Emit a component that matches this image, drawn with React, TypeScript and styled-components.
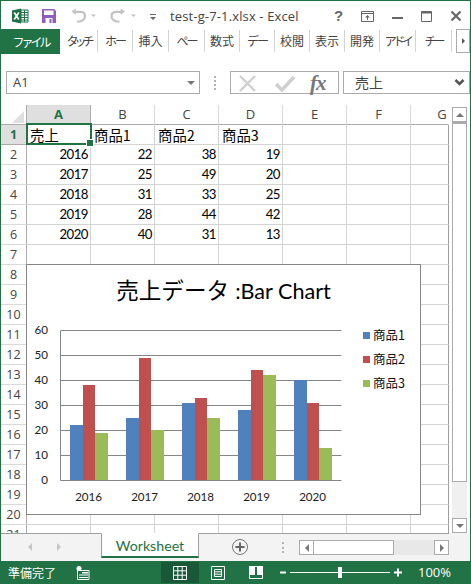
import React from "react";
import styled, { createGlobalStyle } from "styled-components";

const GREEN = "#217346";
const CJK = `"Noto Sans CJK JP", "Noto Sans", sans-serif`;
const LATIN = `Lato, "Noto Sans CJK JP", sans-serif`;
const UI = `"Open Sans", "Noto Sans CJK JP", sans-serif`;

const Global = createGlobalStyle`
  html, body { margin: 0; padding: 0; background: #fff; }
  * { box-sizing: border-box; }
`;

const Win = styled.div`
  width: 471px; height: 584px; display: flex; flex-direction: column;
  border: 1px solid ${GREEN}; border-bottom: 0; background: #fff; overflow: hidden;
  position: relative; font-family: ${UI};
`;

/* Title bar */
const TitleBar = styled.div`
  height: 28px; flex: none; display: flex; align-items: center; position: relative;
`;
const QatIcon = styled.svg<{ $left: number }>`
  position: absolute; left: ${p => p.$left}px; top: 0; display: block;
`;
const DocTitle = styled.div`
  position: absolute; left: 169px; top: 6px; font: 13px/18px ${UI}; color: #444; white-space: nowrap; letter-spacing: 0.14px;
`;

/* Ribbon */
const RibbonTabs = styled.div`
  height: 25px; flex: none; display: flex; align-items: stretch; position: relative;
`;
const FileTab = styled.div`
  width: 59px; background: ${GREEN}; color: #fff; font: 12px/25px ${CJK}; text-align: center; letter-spacing: -3px;
`;
const RibbonTab = styled.div<{ $w: number; $ls?: number }>`
  width: ${p => p.$w}px; height: 22px; margin-top: 1px; border-right: 1px solid #d4d4d4; color: #444;
  font: 12px/22px ${CJK}; text-align: center; white-space: nowrap; overflow: hidden;
  letter-spacing: ${p => p.$ls ?? 0}px;
`;
const RibbonMore = styled.div`
  position: absolute; left: 455px; top: 0; width: 14px; height: 24px; border: 1px solid #ababab; background: #fff;
  display: flex; align-items: center; justify-content: center;
`;
const Tri = styled.i<{ $dir: "r" | "l" | "u" | "d"; $size: number; $color: string }>`
  display: block; width: 0; height: 0; border-style: solid; border-color: transparent;
  border-width: ${p => p.$size}px;
  ${p => p.$dir === "r" && `border-left-color:${p.$color}; border-right-width:0;`}
  ${p => p.$dir === "l" && `border-right-color:${p.$color}; border-left-width:0;`}
  ${p => p.$dir === "u" && `border-bottom-color:${p.$color}; border-top-width:0;`}
  ${p => p.$dir === "d" && `border-top-color:${p.$color}; border-bottom-width:0;`}
`;

/* Formula bar */
const FormulaBar = styled.div`
  height: 51px; flex: none; padding: 17px 0 11px 5px; display: flex; align-items: stretch;
`;
const NameBox = styled.div`
  width: 194px; border: 1px solid #ababab; display: flex; align-items: center; justify-content: space-between;
  padding: 0 4px 0 6px; font: 13px/21px ${UI}; color: #444;
`;
const Grip = styled.div<{ $h: number; $ml: number; $mr: number }>`
  width: 2px; height: ${p => p.$h}px; align-self: center; margin: 0 ${p => p.$mr}px 0 ${p => p.$ml}px;
  background: repeating-linear-gradient(#b4b4b4 0 2px, transparent 2px 4px);
`;
const FormulaButtons = styled.div`
  width: 109px; border: 1px solid #ababab; position: relative; display: flex; align-items: center;
`;
const CommitIcon = styled.svg`
  display: block;
`;
const FxText = styled.span`
  position: absolute; left: 79px; top: -1px; font: italic bold 21px/24px "Liberation Serif", serif; color: #777; letter-spacing: -1px;
`;
const FormulaInput = styled.div`
  width: 127px; margin-left: 4px; border: 1px solid #ababab; display: flex; align-items: center; justify-content: space-between;
  padding: 0 4px 0 11px; font: 14px/21px ${CJK}; color: #444;
`;
const ChevronIcon = styled.svg`
  display: block;
`;

/* Sheet */
const SheetArea = styled.div`
  flex: 1; min-height: 0; display: flex; position: relative;
`;
const Grid = styled.div`
  width: 448px; flex: none; height: 428px; overflow: hidden; position: relative;
  display: grid; grid-template-columns: 26px repeat(6, 64px) 38px; grid-auto-rows: 20px; align-content: start;
`;
const Corner = styled.div`
  border-right: 1px solid #ababab; border-bottom: 1px solid #ababab; position: relative;
  &::after {
    content: ""; position: absolute; right: 2px; bottom: 1px; width: 0; height: 0;
    border-style: solid; border-width: 0 0 12px 12px; border-color: transparent transparent #dfdfdf transparent;
  }
`;
const ColHead = styled.div<{ $active?: boolean; $clipped?: boolean }>`
  border-bottom: 1px solid #ababab; border-right: 1px solid ${p => (p.$active ? "#ababab" : "#dadada")};
  background: ${p => (p.$active ? "#dfdfdf" : "#fff")};
  color: ${p => (p.$active ? GREEN : "#444")}; font: ${p => (p.$active ? 700 : 400)} 13px/19px ${UI}; text-align: center;
  ${p => p.$clipped && "border-right-color:#fff; padding-left: 25px;"}
`;
const RowHead = styled.div<{ $active?: boolean }>`
  border-right: 1px solid #ababab; border-bottom: 1px solid ${p => (p.$active ? "#ababab" : "#dadada")};
  background: ${p => (p.$active ? "#dfdfdf" : "#fff")};
  color: ${p => (p.$active ? GREEN : "#444")}; font: ${p => (p.$active ? 700 : 400)} 12.5px/20px ${UI}; text-align: center;
`;
const Cell = styled.div<{ $text?: boolean; $last?: boolean }>`
  border-right: 1px solid ${p => (p.$last ? "#9f9f9f" : "#d4d4d4")}; border-bottom: 1px solid #d4d4d4; color: #000;
  font: ${p => (p.$text ? `14.4px/19px ${CJK}` : `13.2px/19px ${LATIN}`)};
  letter-spacing: ${p => (p.$text ? 0 : -0.5)}px;
  text-align: ${p => (p.$text ? "left" : "right")};
  padding: ${p => (p.$text ? "0 0 0 3px" : "0 2px 0 0")}; white-space: nowrap;
`;
const ActiveCell = styled.div`
  position: absolute; left: 25px; top: 18px; width: 66px; height: 22px; border: 2px solid ${GREEN}; pointer-events: none;
  &::after {
    content: ""; position: absolute; right: -4px; bottom: -4px; width: 6px; height: 6px;
    background: ${GREEN}; border: 1px solid #fff;
  }
`;

/* Chart */
const ChartBox = styled.div`
  position: absolute; left: 25px; top: 159px; width: 395px; height: 251px;
  background: #fff; border: 1px solid #868686; display: flex; flex-direction: column;
`;
const ChartTitle = styled.div`
  height: 50px; flex: none; text-align: center; color: #000; font: 22.6px/50px ${CJK}; white-space: nowrap;
`;
const ChartTitleLatin = styled.span`
  font: 21.6px/50px ${LATIN}; margin-left: 6px;
`;
const ChartBody = styled.div`
  flex: 1; display: flex;
`;
const PlotSvg = styled.svg`
  display: block; flex: none; font-family: ${LATIN}; font-size: 11.6px;
`;
const Legend = styled.div`
  padding: 10px 0 0 6px; display: flex; flex-direction: column; gap: 4px;
`;
const LegendItem = styled.div`
  display: flex; align-items: center; gap: 3px; height: 20px; font: 12.5px/20px ${CJK}; color: #111;
`;
const Swatch = styled.i<{ $c: string }>`
  display: block; width: 7px; height: 7px; background: ${p => p.$c};
`;

/* Vertical scrollbar */
const VScroll = styled.div`
  width: 15px; flex: none; margin-left: 3px; height: 428px; display: flex; flex-direction: column; padding-top: 2px;
`;
const ScrollBtn = styled.div`
  flex: none; width: 15px; height: 15px; border: 1px solid #ababab; background: #fff;
  display: flex; align-items: center; justify-content: center;
`;
const VThumb = styled.div`
  flex: none; height: 360px; border: 1px solid #ababab; border-top-width: 2px; background: #fff;
`;
const VTrack = styled.div`
  flex: 1; background: #f0f0f0;
`;

/* Tab bar */
const TabBar = styled.div`
  height: 28px; flex: none; background: #f3f3f3; display: flex; align-items: flex-start; position: relative;
`;
const TabLine = styled.div`
  position: absolute; left: 0; top: 0; width: 448px; height: 1px; background: #9f9f9f;
`;
const TabNav = styled.div`
  width: 100px; height: 25px; flex: none; display: flex; align-items: center; gap: 25px; padding: 2px 0 0 27px;
`;
const SheetTab = styled.div`
  width: 98px; height: 25px; flex: none; position: relative; background: #fff; border: 1px solid #9f9f9f; border-top-color: #fff; border-bottom: 2px solid ${GREEN};
  color: ${GREEN}; font: 14.2px/24px ${LATIN}; text-align: center;
`;
const AddSheet = styled.svg`
  display: block; flex: none; margin: 5px 0 0 32px;
`;
const TabGrip = styled.div`
  width: 2px; height: 11px; flex: none; margin: 9px 15px 0 33px;
  background: repeating-linear-gradient(#b4b4b4 0 2px, transparent 2px 4.5px);
`;
const HScroll = styled.div`
  width: 150px; flex: none; height: 15px; margin-top: 7px; display: flex;
`;
const HThumb = styled.div`
  width: 80px; flex: none; background: #fff; border: 1px solid #ababab; border-left: 0;
`;
const HTrack = styled.div`
  flex: 1; background: #e8e8e8;
`;

/* Status bar */
const StatusBar = styled.div`
  height: 23px; flex: none; background: ${GREEN}; margin: 0 -1px; display: flex; align-items: center; color: #fff; position: relative;
`;
const StatusText = styled.div`
  font: 12px/23px ${CJK}; margin-left: 8px; width: 68px; flex: none;
`;
const StatusIcon = styled.svg`
  display: block; flex: none;
`;
const Spacer = styled.div<{ $w: number }>`
  width: ${p => p.$w}px; flex: none;
`;
const ViewButton = styled.div<{ $active?: boolean }>`
  width: 38px; height: 21px; flex: none; display: flex; align-items: center; justify-content: center;
  background: ${p => (p.$active ? "#19593a" : "transparent")};
`;
const ZoomPct = styled.div`
  font: 13px/23px ${UI}; margin-left: 16px; color: #fff;
`;
const ZoomTrack = styled.div`
  width: 100px; height: 1px; background: #fff; flex: none; margin: 0 4px; position: relative;
`;
const ZoomThumb = styled.div`
  position: absolute; left: 48px; top: -5px; width: 4px; height: 11px; background: #fff;
`;

const columns = ["B", "C", "D", "E", "F", "G"];
const data: [number, number, number, number][] = [
  [2016, 22, 38, 19],
  [2017, 25, 49, 20],
  [2018, 31, 33, 25],
  [2019, 28, 44, 42],
  [2020, 40, 31, 13],
];
const series = ["#4f81bd", "#c0504d", "#9bbb59"];
const names = ["商品1", "商品2", "商品3"];
const ribbon: [string, number, number?][] = [
  ["タッチ", 38, -4],
  ["ホー", 35, -2],
  ["挿入", 36],
  ["ペー", 36, -2],
  ["数式", 35],
  ["デー", 35, -2],
  ["校閲", 35],
  ["表示", 35],
  ["開発", 35],
  ["アドイ", 36, -3.5],
  ["チー", 36, -3],
];

const Plot = () => {
  const ox = 27, oy = 315;
  const yFor = (v: number) => 480.5 - v * 2.5 - oy;
  return (
    <PlotSvg width={330} height={199} viewBox="0 0 330 199">
      {[0, 10, 20, 30, 40, 50, 60].map(v => (
        <g key={v}>
          <line x1={60.5 - ox} x2={341.5 - ox} y1={yFor(v)} y2={yFor(v)} stroke="#868686" strokeWidth={1} />
          <text x={48 - ox} y={yFor(v) + 3.5} textAnchor="end" fill="#222">{v}</text>
        </g>
      ))}
      <line x1={60.5 - ox} x2={60.5 - ox} y1={yFor(60)} y2={yFor(0)} stroke="#868686" />
      {data.map((row, i) => (
        <g key={row[0]}>
          {[row[1], row[2], row[3]].map((v, s) => (
            <rect key={s} x={70 + 56 * i + s * 12.5 - ox} width={12.5} y={yFor(v) - 0.5} height={v * 2.5} fill={series[s]} shapeRendering="crispEdges" />
          ))}
          <text x={88.6 + 56 * i - ox} y={501 - oy} textAnchor="middle" fill="#222">{row[0]}</text>
        </g>
      ))}
    </PlotSvg>
  );
};

const RowCells = ({ r }: { r: number }) => {
  const cells: (string | number)[] = r === 1 ? ["売上", ...names] : r <= 6 ? data[r - 2] : ["", "", "", ""];
  return (
    <>
      <RowHead $active={r === 1}>{r}</RowHead>
      {[0, 1, 2, 3, 4, 5, 6].map(c => {
        const v = cells[c];
        return <Cell key={c} $text={typeof v === "string"} $last={c === 6}>{v ?? ""}</Cell>;
      })}
    </>
  );
};

export default function App() {
  return (
    <>
      <Global />
      <Win>
        <TitleBar>
          <QatIcon $left={10} width={18} height={28} viewBox="0 0 18 28">
            <path d="M1 9.500 10 7.500V22.500L1 20.500Z" fill="#1e7145" />
            <path d="M10 9H17V21H10Z" fill="#fff" stroke="#1e7145" />
            <path d="M10 11.500H17M10 14H17M10 16.500H17M10 19H17M13.500 9V21" stroke="#1e7145" strokeWidth={1} />
            <path d="M3.200 11.500 7.800 18.500M7.800 11.500 3.200 18.500" stroke="#fff" strokeWidth={1.700} />
          </QatIcon>
          <QatIcon $left={40} width={16} height={28} viewBox="0 0 16 28">
            <path d="M1 8H13L15 10V22H1Z" fill="#8e5fb8" />
            <path d="M3 9.500H12.500V14H3Z" fill="#fff" />
            <path d="M4.500 17H11.500V22H4.500Z" fill="#fff" />
            <path d="M8.500 18H10.500V22H8.500Z" fill="#8e5fb8" />
          </QatIcon>
          <QatIcon $left={68} width={30} height={28} viewBox="0 0 30 28">
            <path d="M2.500 10.500 6.800 7.500V14Z" fill="#c2c2c2" />
            <path d="M6 10.800H11.500Q16 11 16 15T11 20.500H8" fill="none" stroke="#c2c2c2" strokeWidth={2.200} />
            <path d="M22 13.500H27L24.500 16Z" fill="#c2c2c2" />
          </QatIcon>
          <QatIcon $left={108} width={30} height={28} viewBox="0 0 30 28">
            <path d="M16 10.500 11.700 7.500V14Z" fill="#c2c2c2" />
            <path d="M12.500 10.800H7Q2.500 11 2.500 15T7.500 20.500H10.500" fill="none" stroke="#c2c2c2" strokeWidth={2.200} />
            <path d="M22 13.500H27L24.500 16Z" fill="#c2c2c2" />
          </QatIcon>
          <QatIcon $left={148} width={10} height={28} viewBox="0 0 10 28">
            <path d="M1 13H7V14H1Z" fill="#666" />
            <path d="M1 16H7L4 19Z" fill="#666" />
          </QatIcon>
          <DocTitle>test-g-7-1.xlsx - Excel</DocTitle>
          <QatIcon $left={330} width={140} height={28} viewBox="0 0 140 28">
            <text x={3} y={20} fontFamily="Liberation Sans, sans-serif" fontWeight={700} fontSize={15} fill="#666">?</text>
            <path d="M30.500 10.500H42.500V20.500H30.500Z" fill="none" stroke="#666" />
            <path d="M31 12.500H42" stroke="#666" />
            <path d="M36.500 14 39 16.500H34Z M36 16.500H37V19H36Z" fill="#666" />
            <path d="M61 16H72V18H61Z" fill="#666" />
            <path d="M90.500 10.500H100.500V20.500H90.500Z" fill="none" stroke="#666" />
            <path d="M90.500 11.500H100.500" stroke="#666" strokeWidth={2} />
            <path d="M120.500 10.500 129.500 19.500M129.500 10.500 120.500 19.500" stroke="#666" strokeWidth={2.200} />
          </QatIcon>
        </TitleBar>

        <RibbonTabs>
          <FileTab>ファイル</FileTab>
          {ribbon.map(([label, w, ls]) => (
            <RibbonTab key={label} $w={w} $ls={ls}>{label}</RibbonTab>
          ))}
          <RibbonMore><Tri $dir="r" $size={3} $color="#555" /></RibbonMore>
        </RibbonTabs>

        <FormulaBar>
          <NameBox>A1<Tri $dir="d" $size={4} $color="#777" /></NameBox>
          <Grip $h={14} $ml={14} $mr={14} />
          <FormulaButtons>
            <CommitIcon width="70" height="22" viewBox="0 0 70 22">
              <path d="M9 4 24 19M24 4 9 19" stroke="#cfcfcf" strokeWidth={2.400} fill="none" />
              <path d="M45 12 51 18 63 5" stroke="#cfcfcf" strokeWidth={3.400} fill="none" />
            </CommitIcon>
            <FxText>fx</FxText>
          </FormulaButtons>
          <FormulaInput>
            売上
            <ChevronIcon width="11" height="9" viewBox="0 0 11 9">
              <path d="M1.500 2 5.500 6 9.500 2" stroke="#555" strokeWidth={2.600} fill="none" />
            </ChevronIcon>
          </FormulaInput>
        </FormulaBar>

        <SheetArea>
          <Grid>
            <Corner />
            <ColHead $active>A</ColHead>
            {columns.map((c, i) => <ColHead key={c} $clipped={i === 5}>{c}</ColHead>)}
            {Array.from({ length: 21 }, (_, i) => <RowCells key={i} r={i + 1} />)}
            <ActiveCell />
            <ChartBox>
              <ChartTitle>売上データ<ChartTitleLatin>:Bar Chart</ChartTitleLatin></ChartTitle>
              <ChartBody>
                <Plot />
                <Legend>
                  {names.map((n, i) => (
                    <LegendItem key={n}><Swatch $c={series[i]} />{n}</LegendItem>
                  ))}
                </Legend>
              </ChartBody>
            </ChartBox>
          </Grid>
          <VScroll>
            <ScrollBtn><Tri $dir="u" $size={4} $color="#777" /></ScrollBtn>
            <VThumb />
            <VTrack />
            <ScrollBtn><Tri $dir="d" $size={4} $color="#777" /></ScrollBtn>
          </VScroll>
        </SheetArea>

        <TabBar>
          <TabLine />
          <TabNav>
            <Tri $dir="l" $size={4} $color="#c6c6c6" />
            <Tri $dir="r" $size={4} $color="#c6c6c6" />
          </TabNav>
          <SheetTab>Worksheet</SheetTab>
          <AddSheet width="18" height="18" viewBox="0 0 18 18">
            <circle cx="9" cy="9" r="7.500" fill="none" stroke="#777" />
            <path d="M4.500 9H13.500M9 4.500V13.500" stroke="#666" strokeWidth={2} />
          </AddSheet>
          <TabGrip />
          <HScroll>
            <ScrollBtn><Tri $dir="l" $size={4} $color="#777" /></ScrollBtn>
            <HThumb />
            <HTrack />
            <ScrollBtn><Tri $dir="r" $size={4} $color="#777" /></ScrollBtn>
          </HScroll>
        </TabBar>

        <StatusBar>
          <StatusText>準備完了</StatusText>
          <StatusIcon width="14" height="14" viewBox="0 0 14 14">
            <circle cx="3" cy="2.500" r="2.500" fill="#fff" />
            <path d="M1.500 4.500H13V13.500H1.500Z" fill="none" stroke="#fff" />
            <path d="M6 6H12V7.500H6ZM3 8.500H12V9.500H3ZM3 11H12V12H3Z" fill="#fff" />
          </StatusIcon>
          <Spacer $w={71} />
          <ViewButton $active>
            <StatusIcon width="14" height="14" viewBox="0 0 14 14"><path d="M.5.5H13.500V13.500H.5ZM.5 4.800H13.500M.5 9.200H13.500M4.800.5V13.500M9.200.5V13.500" fill="none" stroke="#fff" /></StatusIcon>
          </ViewButton>
          <ViewButton>
            <StatusIcon width="14" height="14" viewBox="0 0 14 14"><path d="M.5.5H13.500V13.500H.5ZM3.500 3.500H10.500V10.500H3.500ZM3.500 5.800H10.500M3.500 8.200H10.500" fill="none" stroke="#fff" /></StatusIcon>
          </ViewButton>
          <ViewButton>
            <StatusIcon width="14" height="13" viewBox="0 0 14 13"><path d="M.5.5H13.500V12.500H.5Z" fill="none" stroke="#fff" /><path d="M0 0H6V9H0ZM8 0H14V9H8Z" fill="#fff" /></StatusIcon>
          </ViewButton>
          <Spacer $w={5} />
          <StatusIcon width="6" height="9" viewBox="0 0 6 9"><path d="M0 3.500H6V5.500H0Z" fill="#fff" /></StatusIcon>
          <ZoomTrack><ZoomThumb /></ZoomTrack>
          <StatusIcon width="8" height="9" viewBox="0 0 8 9"><path d="M0 3.500H8V5.500H0ZM3 .5H5V8.500H3Z" fill="#fff" /></StatusIcon>
          <ZoomPct>100%</ZoomPct>
        </StatusBar>
      </Win>
    </>
  );
}
